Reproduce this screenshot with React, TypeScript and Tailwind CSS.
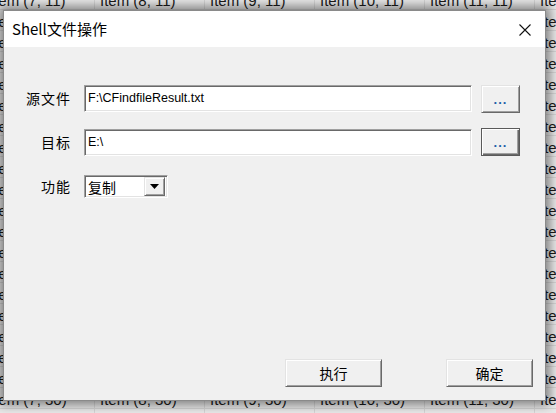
import React from "react";

const COLS = [7, 8, 9, 10, 11, 12];
const ROWS = Array.from({ length: 21 }, (_, i) => i + 11);

const raised =
  "border border-t-[#e3e3e3] border-l-[#e3e3e3] border-r-[#696969] border-b-[#696969] shadow-[inset_1px_1px_#ffffff,inset_-1px_-1px_#a0a0a0] bg-[#f0f0f0]";
const sunken =
  "border border-t-[#a0a0a0] border-l-[#a0a0a0] border-r-white border-b-white shadow-[inset_1px_1px_#696969,inset_-1px_-1px_#e3e3e3] bg-white";

const cjk = "font-['Noto_Sans_CJK_SC',sans-serif]";

const BrowseButton = ({ focused }: { focused?: boolean }) => (
  <button
    className={
      focused
        ? "w-[39px] h-[28px] border border-[#5a5a5a] bg-[#f0f0f0] shadow-[inset_1px_1px_#ffffff,inset_-1px_-1px_#696969,inset_-2px_-2px_#a0a0a0] flex items-center justify-center"
        : `w-[39px] h-[28px] ${raised} flex items-center justify-center`
    }
  >
    <span className="text-[13px] font-bold leading-none text-[#1f5fa8] tracking-[1px] font-['Liberation_Sans',sans-serif]">
      ...
    </span>
  </button>
);

const Dialog = () => (
  <div className="absolute left-[3px] top-[10px] w-[543px] h-[391px] border border-[#8a8a8a] bg-[#f0f0f0] flex flex-col shadow-[0_0_10px_4px_rgba(0,0,0,0.45)]">
    {/* title bar */}
    <div className="h-[36px] bg-white flex items-center justify-between pl-[8px] pr-[14px]">
      <span className={`text-[15px] text-black ${cjk}`}>Shell文件操作</span>
      <svg width="12" height="12" viewBox="0 0 12 12" className="mt-[1px]">
        <path d="M0.5 0.5 L11.5 11.5 M11.5 0.5 L0.5 11.5" stroke="#111" strokeWidth="1.1" />
      </svg>
    </div>

    <div className={`flex-1 flex flex-col pt-[38px] pb-[13px] pr-[12px] ${cjk} text-[14px] text-black`}>
      {/* source */}
      <div className="flex items-start">
        <span className="w-[67px] text-right leading-[27px] tracking-[1px]">源文件</span>
        <div className={`ml-[13px] w-[388px] h-[27px] ${sunken} flex items-center pl-[3px]`}>
          <span className="text-[12.5px] font-['Liberation_Sans',sans-serif]">F:\CFindfileResult.txt</span>
        </div>
        <div className="ml-[9px]">
          <BrowseButton />
        </div>
      </div>

      {/* target */}
      <div className="flex items-start mt-[15px]">
        <span className="w-[67px] text-right leading-[27px] mt-[1px] tracking-[1px]">目标</span>
        <div className={`ml-[13px] mt-[1px] w-[388px] h-[27px] ${sunken} flex items-center pl-[3px]`}>
          <span className="text-[12.5px] font-['Liberation_Sans',sans-serif]">E:\</span>
        </div>
        <div className="ml-[9px]">
          <BrowseButton focused />
        </div>
      </div>

      {/* function */}
      <div className="flex items-center mt-[19px]">
        <span className="w-[67px] text-right leading-[23px] tracking-[1px]">功能</span>
        <div className={`ml-[13px] w-[84px] h-[23px] ${sunken} flex items-center justify-between pl-[3px] pr-[2px]`}>
          <span className="leading-none">复制</span>
          <div className={`w-[21px] h-[19px] ${raised} flex items-center justify-center`}>
            <svg width="9" height="5" viewBox="0 0 9 5">
              <path d="M0 0 H9 L4.5 5 Z" fill="#000" />
            </svg>
          </div>
        </div>
      </div>

      {/* actions */}
      <div className="mt-auto flex justify-end gap-[64px]">
        <button className={`w-[97px] h-[28px] ${raised} ${cjk} text-[14px]`}>执行</button>
        <button className={`w-[87px] h-[28px] ${raised} ${cjk} text-[14px]`}>确定</button>
      </div>
    </div>
  </div>
);

export default function App() {
  return (
    <div className="relative w-[556px] h-[413px] overflow-hidden bg-[#f0f0f0] font-['Liberation_Sans',sans-serif]">
      {/* list behind the dialog */}
      <div className="-ml-[15px] -mt-[11px] flex flex-col">
        {ROWS.map((r) => (
          <div key={`row-${r}`} className="flex">
            {COLS.map((c) => (
              <div
                key={`cell-${c}-${r}`}
                className="w-[110px] h-[21px] shrink-0 border-r border-b border-[#d6d6d6] bg-[#eaeaea] pl-[5px] pt-[2px] text-[15px] leading-[19px] text-[#1a1a1a] whitespace-nowrap overflow-hidden"
              >
                Item ({c}, {r})
              </div>
            ))}
          </div>
        ))}
      </div>

      <Dialog />
    </div>
  );
}
